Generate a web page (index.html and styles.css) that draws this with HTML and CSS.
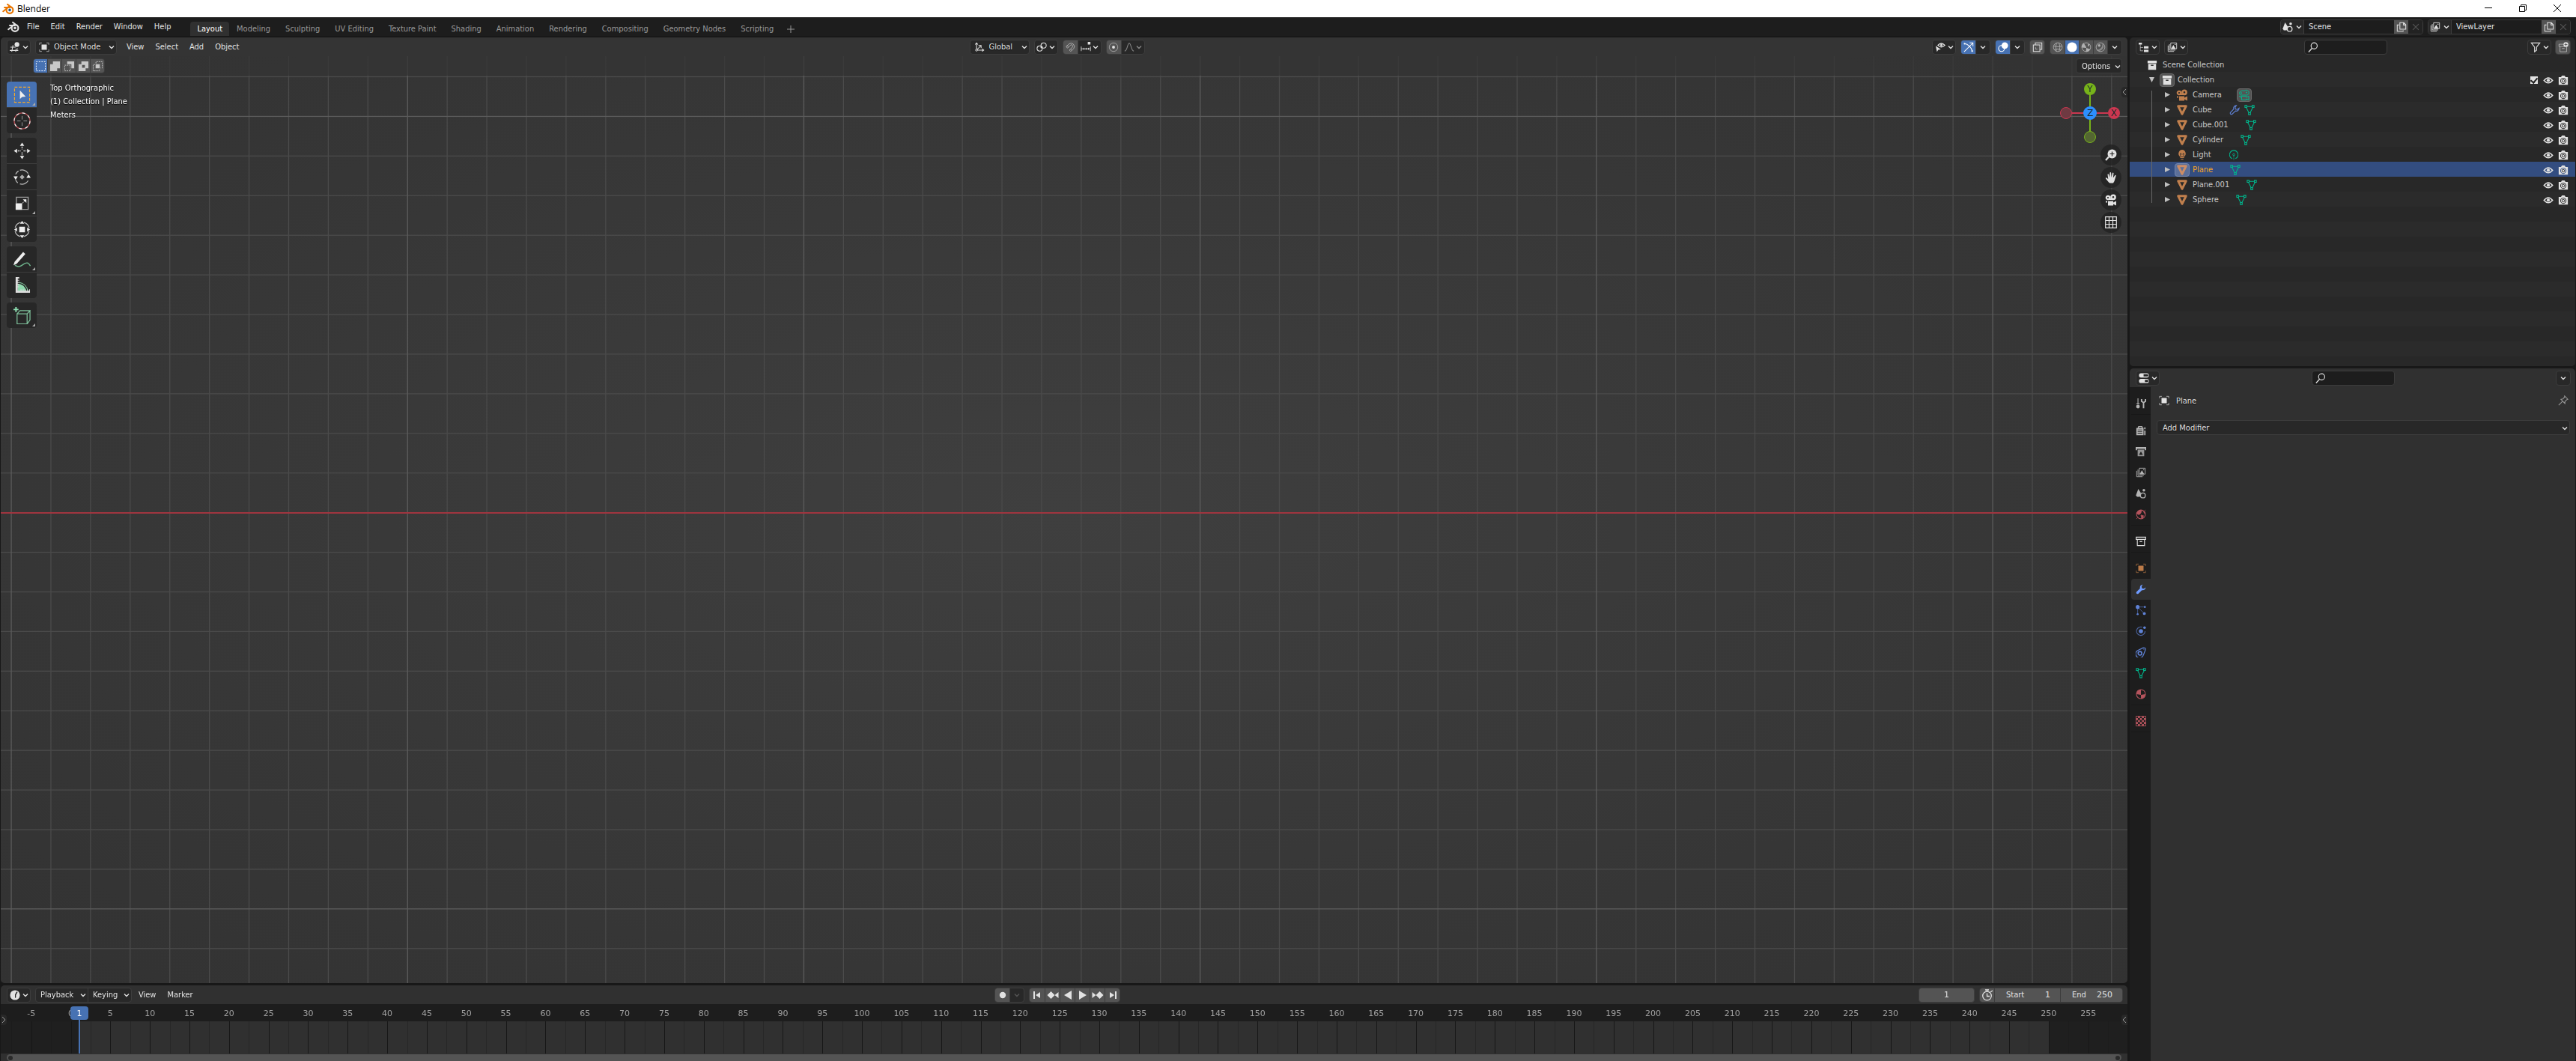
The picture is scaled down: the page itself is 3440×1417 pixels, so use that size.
FILE: index.html
```html
<!DOCTYPE html>
<html lang="en">
<head>
<meta charset="utf-8">
<title>Blender</title>
<link rel="stylesheet" href="styles.css">
</head>
<body>
<svg class="sprite" aria-hidden="true">
  <symbol id="logo" viewBox="0 0 16 16"><path d="M1.2 11.2 8.6 5.2M3 5.9h7M7 1.8l5.8 4.5" fill="none" stroke="currentColor" stroke-width="2" stroke-linecap="round"/><circle cx="10" cy="9.4" r="4.4" fill="none" stroke="currentColor" stroke-width="2.2"/><circle class="pupil" cx="10" cy="9.4" r="1.8"/></symbol>
  <symbol id="chev" viewBox="0 0 8 8"><path d="M1 2.5 4 5.5 7 2.5" fill="none" stroke="currentColor" stroke-width="1.4"/></symbol>
  <symbol id="view3d" viewBox="0 0 16 16"><path d="M1 8h8M0 13h13M5 5 3 15M10 10l-1 5M12 10v1" fill="none" stroke="currentColor" stroke-width="1.2"/><circle cx="11" cy="4" r="3.6" fill="currentColor"/></symbol>
  <symbol id="object" viewBox="0 0 16 16"><path d="M1 4.500V1.500H4.500M11.500 1.500H15V4.500M15 11.500v3H11.500M4.500 14.500H1v-3" fill="none" stroke="currentColor" opacity=".75"/><path d="M4 4h8v8H4z" fill="currentColor"/></symbol>
  <symbol id="axes" viewBox="0 0 16 16"><path d="M3.500 2v10.500H14M3.500 12.500 10 6M1.500 4l2-2.500 2 2.500M12 10.500l2.500 2-2.500 2M6.500 5.500H10.500V9.500" fill="none" stroke="currentColor" stroke-width="1.2"/><circle cx="3.500" cy="12.500" r="1.500" fill="#282828" stroke="currentColor"/></symbol>
  <symbol id="pivot" viewBox="0 0 16 16"><circle cx="5" cy="10" r="4" fill="none" stroke="currentColor" stroke-width="1.200"/><circle cx="11" cy="5.500" r="4" fill="none" stroke="currentColor" stroke-width="1.200"/><circle cx="8" cy="8" r="1.800" fill="currentColor"/></symbol>
  <symbol id="magnet" viewBox="0 0 16 16"><path d="M2 7 6.500 3a5 5 0 0 1 7 7L9 14.500 7 12.500l4.500-4.500a2 2 0 0 0-3-3L4 9.500zM3.500 5.500l2 2M10.500 13l-2-2" fill="none" stroke="currentColor" stroke-width="1.100"/></symbol>
  <symbol id="snap" viewBox="0 0 16 16"><path d="M1 7v7M15 7v7M1 10.500h14M5 9v3M8.500 9v3M12 9v3" fill="none" stroke="currentColor"/><path d="M11 0h4v4h-4z" fill="currentColor"/></symbol>
  <symbol id="prop" viewBox="0 0 16 16"><circle cx="8" cy="8" r="6.500" fill="none" stroke="currentColor" opacity=".6"/><circle cx="8" cy="8" r="2.200" fill="currentColor"/></symbol>
  <symbol id="falloff" viewBox="0 0 16 16"><path d="M1 14C5.500 13 5 2 8 2s2.500 11 7 12" fill="none" stroke="currentColor" stroke-width="1.200"/></symbol>
  <symbol id="visib" viewBox="0 0 16 16"><path d="M4.500 5Q9.500-.5 15 5 9.500 10.500 4.500 5z" fill="none" stroke="currentColor" stroke-width="1.600"/><circle cx="9.700" cy="4.800" r="1.700" fill="currentColor"/><path d="M1 6l8 5.500-4 .5L3 15z" fill="currentColor"/></symbol>
  <symbol id="gizmo" viewBox="0 0 16 16"><path d="M1 15 14 2M9.500 1.500H14.500V6.500M1.500 2.500C7 3 13 9 13.500 14.500" fill="none" stroke="currentColor" stroke-width="1.200"/><circle cx="1.800" cy="2.800" r="1.300" fill="currentColor"/><circle cx="13.300" cy="14" r="1.300" fill="currentColor"/></symbol>
  <symbol id="overlay" viewBox="0 0 16 16"><circle cx="10.500" cy="5.500" r="5" fill="currentColor"/><circle cx="5.500" cy="10" r="4.500" fill="none" stroke="currentColor" stroke-width="1.200"/></symbol>
  <symbol id="xray" viewBox="0 0 16 16"><path d="M1.500 4.500h10v10h-10zM4.500 4V1.500h10v10H12" fill="none" stroke="currentColor" stroke-width="1.200"/><path d="M5 8.500v2.500h3" fill="none" stroke="currentColor" stroke-dasharray="1.500 1"/></symbol>
  <symbol id="wire" viewBox="0 0 16 16"><g fill="none" stroke="currentColor"><circle cx="8" cy="8" r="6.700"/><path d="M1.500 6Q8 9 14.500 6M2.500 12Q8 9.500 13.500 12M6 1.500Q3.500 8 6 14.500M10 1.500Q12.500 8 10 14.500"/></g></symbol>
  <symbol id="solid" viewBox="0 0 16 16"><circle cx="8" cy="8" r="7.500" fill="currentColor"/></symbol>
  <symbol id="matprev" viewBox="0 0 16 16"><circle cx="8" cy="8" r="6.700" fill="none" stroke="currentColor"/><path d="M8 8 4 1.500A7.500 7.500 0 0 0 1 8.500L8 9zM8 9l-.5 6A7 7 0 0 0 14 11zM10.500 3.500h2v3h-2z" fill="currentColor"/></symbol>
  <symbol id="rendered" viewBox="0 0 16 16"><circle cx="8" cy="8" r="6.700" fill="none" stroke="currentColor"/><path d="M2 12Q11 12 11 2A7 7 0 0 1 3 13z" fill="currentColor" opacity=".6"/><circle cx="6" cy="5.500" r="2" fill="currentColor"/></symbol>
  <symbol id="tree" viewBox="0 0 16 16"><path d="M0 1h5v3H0zM8 6.500h7V10H8zM8 12h7v3.500H8z" fill="currentColor"/><path d="M2.500 4v9.500H7M2.500 8.500H7" fill="none" stroke="currentColor" opacity=".7"/></symbol>
  <symbol id="images" viewBox="0 0 16 16"><path d="M5.500 1.500h9v9h-9zM3.500 3.500v9h9M1.500 5.500v9h9" fill="none" stroke="currentColor"/><path d="M6 10.500l3.500-6 3.500 6zM11.500 3h1.500v1.500h-1.500z" fill="currentColor"/></symbol>
  <symbol id="scene" viewBox="0 0 16 16"><path d="M4 1 8 7.500 6.500 13H2L.5 10.500z" fill="currentColor"/><circle cx="12.500" cy="3" r="2" fill="currentColor"/><circle cx="11" cy="11" r="3.700" fill="none" stroke="currentColor" stroke-width="1.500"/></symbol>
  <symbol id="copy" viewBox="0 0 16 16"><path d="M5.500 1.500h6l3 3v7h-9zM11 1.500V5h3.500M4 5H1.500v9.500h9V13" fill="none" stroke="currentColor" stroke-width="1.200"/></symbol>
  <symbol id="close" viewBox="0 0 16 16"><path d="M3.500 3.500l9 9M12.500 3.500l-9 9" stroke="currentColor" stroke-width="1.200"/></symbol>
  <symbol id="search" viewBox="0 0 16 16"><circle cx="9.500" cy="6" r="4.700" fill="none" stroke="currentColor" stroke-width="1.300"/><path d="M6.500 9.500 1 15.500" stroke="currentColor" stroke-width="1.500"/></symbol>
  <symbol id="filter" viewBox="0 0 16 16"><path d="M1.500 1.500h13L9.500 8v4.500l-3 2.500V8z" fill="none" stroke="currentColor" stroke-width="1.300"/></symbol>
  <symbol id="newcol" viewBox="0 0 16 16"><path d="M8 3.500H1.500V7H14M3 7v8h10V8M6 10h4" fill="none" stroke="currentColor" opacity=".7"/><circle cx="12" cy="4" r="3.700" fill="currentColor"/><path d="M12 1.800v4.400M9.800 4h4.400" stroke="#545454"/></symbol>
  <symbol id="coll" viewBox="0 0 16 16"><path d="M1 1h14v4H1zM2 6h12v9H2z" fill="currentColor"/><path d="M6 7.500h4V9H6z" fill="#222"/></symbol>
  <symbol id="collline" viewBox="0 0 16 16"><path d="M.8 1.500h14.400V5H.8zM2.500 5h11v9.500h-11z" fill="none" stroke="currentColor" stroke-width="1.300"/><path d="M6 7.500h4V9H6z" fill="currentColor"/></symbol>
  <symbol id="camera" viewBox="0 0 16 16"><circle cx="4" cy="5" r="2.200" fill="none" stroke="currentColor" stroke-width="2.200"/><circle cx="11" cy="4.300" r="2.600" fill="none" stroke="currentColor" stroke-width="2.600"/><path d="M4 9.500h7v2l4-2V15.500l-4-2v2H4zM1 9.500h2v2H1zM4 6h6v2H4z" fill="currentColor"/></symbol>
  <symbol id="camdata" viewBox="0 0 16 16"><g fill="none" stroke="currentColor"><path d="M3.500 2.800Q6 1 8 2.500a3.500 3.500 0 1 1 4 5.500H3.500a2.700 2.700 0 0 1 0-5.200zM4.500 9.500h6v1.500l3.500-1.500v5L10.500 13v1.500h-6zM1 9.500h2v2"/></g><circle cx="4" cy="5.300" r="1" fill="currentColor"/><circle cx="11" cy="4.500" r="1" fill="currentColor"/></symbol>
  <symbol id="mesh" viewBox="0 0 16 16"><path d="M2 2h12L8 14z" fill="none" stroke="currentColor" stroke-width="3.400" stroke-linejoin="round"/></symbol>
  <symbol id="meshdata" viewBox="0 0 16 16"><path d="M4 2.500h8M3 4l4 8M13 4l-4 8M1 1h3v3H1zM12 1h3v3h-3zM6.500 12h3v3h-3z" fill="none" stroke="currentColor" stroke-width="1.200"/></symbol>
  <symbol id="light" viewBox="0 0 16 16"><path fill-rule="evenodd" d="M8 0a5.800 5.800 0 0 1 3 10.500H5A5.800 5.800 0 0 1 8 0zM5 5v4h1V6.500h4V9h1V5H9.500v2h-3V5zM5 11.500h6v1H5zM6 14h4v1.200H6z" fill="currentColor"/></symbol>
  <symbol id="lightdata" viewBox="0 0 16 16"><path d="M5.500 13.500a6.500 6.500 0 1 1 5 0" fill="none" stroke="currentColor" stroke-width="1.200"/><circle cx="8" cy="7.500" r="1.500" fill="none" stroke="currentColor"/><path d="M8 9v7" stroke="currentColor" stroke-dasharray="2 1"/></symbol>
  <symbol id="wrench" viewBox="0 0 16 16"><path d="M10.800.8A4.300 4.300 0 0 0 6.700 6.500L1.200 12a2 2 0 0 0 2.800 2.800L9.500 9.300A4.300 4.300 0 0 0 15.200 5L12.500 7 9.500 6.500 9 3.500z" fill="currentColor"/></symbol>
  <symbol id="wrenchline" viewBox="0 0 16 16"><path d="M10.800 1A4.300 4.300 0 0 0 6.700 6.500L1.500 12a2 2 0 0 0 2.500 2.500L9.500 9.300A4.300 4.300 0 0 0 15 5L12.500 7 9.500 6.500 9 3.500z" fill="none" stroke="currentColor" stroke-width="1.300"/></symbol>
  <symbol id="eye" viewBox="0 0 16 16"><path d="M1.500 8.500Q8 .5 14.500 8.500 8 16 1.500 8.500z" fill="none" stroke="currentColor" stroke-width="1.800"/><circle cx="8" cy="8.300" r="2.400" fill="currentColor"/></symbol>
  <symbol id="photo" viewBox="0 0 16 16"><path fill-rule="evenodd" d="M1 3.500h3.500L6 1h4l1.500 2.500H15V15H1zM8 4.500a4.700 4.700 0 1 0 .1 0z" fill="currentColor"/><circle cx="8" cy="9.200" r="3.600" fill="currentColor"/><circle cx="8" cy="9.200" r="2" fill="none" stroke="#282828"/></symbol>
  <symbol id="props" viewBox="0 0 16 16"><rect x=".5" y=".5" width="15" height="6.500" rx="3" fill="currentColor"/><rect x=".5" y="9" width="15" height="6.500" rx="3" fill="currentColor"/><path d="M7.500 2h5.500a1 1 0 0 1 0 3.500H7.500zM9.500 10.500H13a1 1 0 0 1 0 3.500H9.500z" fill="#282828"/></symbol>
  <symbol id="tool" viewBox="0 0 16 16"><path d="M3.500 0v6M1 8h5M3.500 6v3" stroke="currentColor" stroke-width="1.300"/><circle cx="3.500" cy="12.500" r="2.800" fill="currentColor"/><path d="M9 1v3.500L12 6.500 15 4.500V1M12 6.500V15" fill="none" stroke="currentColor" stroke-width="2.200"/></symbol>
  <symbol id="render" viewBox="0 0 16 16"><path fill-rule="evenodd" d="M1 4h2l1-3h6l1 3h1v11H1zM5 4h4V2.500H5zM3 6.500v1h7v-1zM3 9v1h7V9zM3 11.500v1h7v-1zM13 3h2v3h-2zM13 8h2v7h-2z" fill="currentColor"/></symbol>
  <symbol id="output" viewBox="0 0 16 16"><path d="M0 1h16v5h-2V4H2v2H0z" fill="currentColor"/><path fill-rule="evenodd" d="M3 5h10v10H3zM5 13l3-5 3 5z" fill="currentColor" opacity=".8"/></symbol>
  <symbol id="world" viewBox="0 0 16 16"><circle cx="8" cy="8" r="6.700" fill="none" stroke="currentColor" stroke-width="1.200"/><path d="M2 5Q5 1 9 2L8 6 5 8.500 2 7zM8 9l4 1-1 3-2 1zM13 3l2-2M1 15l2-2M12 4l2 3V4z" fill="currentColor" stroke="currentColor" stroke-width=".8"/></symbol>
  <symbol id="particles" viewBox="0 0 16 16"><path d="M3 3h11M3 3v11M3 3l10 10" stroke="currentColor" opacity=".7"/><circle cx="3" cy="3" r="2.900" fill="currentColor"/><circle cx="14" cy="3" r="1.500" fill="currentColor"/><circle cx="3" cy="14" r="1.500" fill="currentColor"/><circle cx="13.200" cy="13" r="2.200" fill="currentColor"/></symbol>
  <symbol id="physics" viewBox="0 0 16 16"><path d="M10 1.800A6.500 6.500 0 1 0 14.300 8" fill="none" stroke="currentColor" opacity=".7" stroke-width="1.200"/><circle cx="8" cy="8" r="3.200" fill="currentColor"/><circle cx="13.500" cy="2.500" r="2" fill="currentColor"/></symbol>
  <symbol id="constraint" viewBox="0 0 16 16"><path d="M2.500 5.800 11.500 1.300Q15.300.5 15 4L11.700 12.500A6 6 0 1 1 2.500 5.800z" fill="none" stroke="currentColor" stroke-width="1.300"/><circle cx="6.500" cy="9.800" r="2.800" fill="none" stroke="currentColor" stroke-width="1.800"/><circle cx="12.500" cy="3.500" r=".8" fill="currentColor"/></symbol>
  <symbol id="material" viewBox="0 0 16 16"><circle cx="8" cy="8" r="6.900" fill="none" stroke="currentColor" stroke-width="1.200"/><path d="M8 1A7 7 0 0 0 1 8l7 1zM8 9l7-1a7 7 0 0 1-7 7z" fill="currentColor"/></symbol>
  <symbol id="texture" viewBox="0 0 16 16"><path d="M.5.5h15v15H.5z" fill="none" stroke="currentColor"/><path d="M3.500.5h3v3h-3zM9.500.5h3v3h-3zM.5 3.500h3v3h-3zM6.500 3.500h3v3h-3zM12.500 3.500h3v3h-3zM3.500 6.500h3v3h-3zM9.500 6.500h3v3h-3zM.5 9.500h3v3h-3zM6.500 9.500h3v3h-3zM12.500 9.500h3v3h-3zM3.500 12.500h3v3h-3zM9.500 12.500h3v3h-3z" fill="currentColor"/></symbol>
  <symbol id="pin" viewBox="0 0 16 16"><path d="M10 1l5 5-1.500.5-3 3v3L4.500 6l3-.5 2.500-3zM7 9l-6 6" fill="none" stroke="currentColor" stroke-width="1.200"/></symbol>
  <symbol id="clock" viewBox="0 0 16 16"><circle cx="8" cy="8" r="7.500" fill="currentColor"/><path d="M10.500 2.500 8 7v5.500l1.500-1V8l2.500-4.500z" fill="#282828"/></symbol>
  <symbol id="stopwatch" viewBox="0 0 16 16"><circle cx="7.500" cy="9" r="5.800" fill="none" stroke="currentColor" stroke-width="1.300"/><path d="M5 1h5M7.500 1v2M7.500 5.500V9.500H11M12 4l3-2" fill="none" stroke="currentColor" stroke-width="1.300"/></symbol>
  <symbol id="rec" viewBox="0 0 16 16"><circle cx="8" cy="8" r="4.200" fill="currentColor"/></symbol>
  <symbol id="first" viewBox="0 0 16 16"><path d="M3 3h2v10H3zM12 4v8L6 8z" fill="currentColor"/></symbol>
  <symbol id="prevkey" viewBox="0 0 16 16"><path d="M5.500 3l5 5-5 5-5-5zM15.500 4v8l-5-4z" fill="currentColor"/></symbol>
  <symbol id="playrev" viewBox="0 0 16 16"><path d="M13 2v12L3 8z" fill="currentColor"/></symbol>
  <symbol id="play" viewBox="0 0 16 16"><path d="M3 2v12l10-6z" fill="currentColor"/></symbol>
  <symbol id="nextkey" viewBox="0 0 16 16"><path d="M10.500 3l5 5-5 5-5-5zM.5 4v8l5-4z" fill="currentColor"/></symbol>
  <symbol id="last" viewBox="0 0 16 16"><path d="M11 3h2v10h-2zM4 4v8l6-4z" fill="currentColor"/></symbol>
  <symbol id="hand" viewBox="0 0 16 16"><path d="M5 14.500 1 9.500Q.5 8 2 8.300l2.300 2L3.500 4q.6-1.300 1.500 0l1.200 4L6.500 1.500q.7-1.200 1.600 0L8.500 8 10 2q.9-1 1.500.3L10.800 8.500 13.500 5q1.200-.5 1.200.8L12.500 13l-1.500 2.500H6.500z" fill="currentColor"/></symbol>
  <symbol id="zoom" viewBox="0 0 16 16"><circle cx="9.500" cy="6.500" r="6" fill="currentColor"/><path d="M5 10.500 1 15" stroke="currentColor" stroke-width="2.200"/><path d="M9.500 3.500v6M6.500 6.500h6" stroke="#222" stroke-width="1.200"/></symbol>
  <symbol id="grid" viewBox="0 0 16 16"><path d="M.7.700h14.600v14.600H.7zM5.500.7v14.600M10.500.7v14.600M.7 5.500h14.600M.7 10.500h14.600" fill="none" stroke="currentColor" stroke-width="1.200"/></symbol>
</svg>

<header class="titlebar">
  <svg class="i16 appicon"><use href="#logo"/></svg><span class="apptitle">Blender</span>
  <div class="winbtns">
    <button aria-label="Minimize"><svg viewBox="0 0 12 12"><path d="M1 5.500h10" stroke="#000"/></svg></button>
    <button aria-label="Restore"><svg viewBox="0 0 12 12"><path d="M1.500 3.500h7v7h-7zM3.500 3V1.500h7v7H9" fill="none" stroke="#000"/></svg></button>
    <button aria-label="Close"><svg viewBox="0 0 12 12"><path d="M1 1l10 10M11 1 1 11" stroke="#000"/></svg></button>
  </div>
</header>

<nav class="topbar">
  <svg class="i16 mainlogo"><use href="#logo"/></svg>
  <div class="menu"><button>File</button><button>Edit</button><button>Render</button><button>Window</button><button>Help</button></div>
  <div class="tabs">
    <button class="on">Layout</button><button>Modeling</button><button>Sculpting</button><button>UV Editing</button><button>Texture Paint</button><button>Shading</button><button>Animation</button><button>Rendering</button><button>Compositing</button><button>Geometry Nodes</button><button>Scripting</button><button class="plus" aria-label="Add workspace"><svg viewBox="0 0 10 10"><path d="M5 0v10M0 5h10" stroke="currentColor"/></svg></button>
  </div>
  <div class="idblock">
    <button class="pick" aria-label="Browse scene"><svg class="i14"><use href="#scene"/></svg><svg class="c"><use href="#chev"/></svg></button><input aria-label="Scene" value="Scene"><button class="lit" aria-label="New scene"><svg class="i14"><use href="#copy"/></svg></button><button class="off" aria-label="Delete scene"><svg class="i14"><use href="#close"/></svg></button>
  </div>
  <div class="idblock">
    <button class="pick" aria-label="Browse view layer"><svg class="i14"><use href="#images"/></svg><svg class="c"><use href="#chev"/></svg></button><input aria-label="View layer" value="ViewLayer"><button class="lit" aria-label="New view layer"><svg class="i14"><use href="#copy"/></svg></button><button class="off" aria-label="Delete view layer"><svg class="i14"><use href="#close"/></svg></button>
  </div>
</nav>

<main class="screen">
  <div class="left">
    <section class="area viewport">
      <canvas id="viewgrid"></canvas>
      <div class="head">
        <div class="part">
          <button class="btn ed" aria-label="Editor type"><svg class="i14"><use href="#view3d"/></svg><svg class="c"><use href="#chev"/></svg></button>
          <label class="btn mode"><svg class="i14"><use href="#object"/></svg><select aria-label="Mode"><option>Object Mode</option></select><svg class="c"><use href="#chev"/></svg></label>
          <div class="menu"><button>View</button><button>Select</button><button>Add</button><button>Object</button></div>
        </div>
        <div class="part mid">
          <label class="btn orient"><svg class="i14"><use href="#axes"/></svg><select aria-label="Orientation"><option>Global</option></select><svg class="c"><use href="#chev"/></svg></label>
          <button class="btn ed" aria-label="Pivot"><svg class="i14"><use href="#pivot"/></svg><svg class="c"><use href="#chev"/></svg></button>
          <div class="btn row"><button class="lit dim" aria-label="Snap"><svg class="i14"><use href="#magnet"/></svg></button><button class="w31" aria-label="Snap to"><svg class="i14"><use href="#snap"/></svg><svg class="c"><use href="#chev"/></svg></button></div>
          <div class="btn row"><button class="lit" aria-label="Proportional editing"><svg class="i14"><use href="#prop"/></svg></button><button class="w31 off2" aria-label="Falloff"><svg class="i14"><use href="#falloff"/></svg><svg class="c"><use href="#chev"/></svg></button></div>
        </div>
        <div class="part end">
          <button class="btn ed" aria-label="Visibility"><svg class="i14"><use href="#visib"/></svg><svg class="c"><use href="#chev"/></svg></button>
          <div class="btn row"><button class="blue" aria-label="Gizmos"><svg class="i14"><use href="#gizmo"/></svg></button><button aria-label="Gizmo options"><svg class="c"><use href="#chev"/></svg></button></div>
          <div class="btn row"><button class="blue" aria-label="Overlays"><svg class="i14"><use href="#overlay"/></svg></button><button aria-label="Overlay options"><svg class="c"><use href="#chev"/></svg></button></div>
          <div class="btn row"><button class="lit" aria-label="X-ray"><svg class="i14"><use href="#xray"/></svg></button></div>
          <div class="btn row"><button class="lit dim" aria-label="Wireframe"><svg class="i14"><use href="#wire"/></svg></button><button class="blue" aria-label="Solid"><svg class="i14"><use href="#solid"/></svg></button><button class="lit dim" aria-label="Material preview"><svg class="i14"><use href="#matprev"/></svg></button><button class="lit dim" aria-label="Rendered"><svg class="i14"><use href="#rendered"/></svg></button><button aria-label="Shading options"><svg class="c"><use href="#chev"/></svg></button></div>
        </div>
      </div>
      <div class="toolhead">
        <div class="btn row modes">
          <button class="blue" aria-label="Set"><svg viewBox="0 0 16 16"><path d="M1.500 1.500h13v13h-13z" fill="none" stroke="#fff" stroke-dasharray="2 1.700"/></svg></button>
          <button class="lit" aria-label="Extend"><svg viewBox="0 0 16 16"><path d="M5 1h10v10h-4v4H1V5h4z" fill="#c8c8c8"/></svg></button>
          <button class="lit" aria-label="Subtract"><svg viewBox="0 0 16 16"><path d="M5 1h10v10h-4V5H5z" fill="#c8c8c8"/><path d="M1.500 6.500h8v8h-8z" fill="none" stroke="#c8c8c8" stroke-dasharray="2 1.200"/></svg></button>
          <button class="lit" aria-label="Invert"><svg viewBox="0 0 16 16"><path fill-rule="evenodd" d="M5 1h10v10h-4v4H1V5h4zM6 6v4h4V6z" fill="#c8c8c8"/></svg></button>
          <button class="lit" aria-label="Intersect"><svg viewBox="0 0 16 16"><path d="M5 5h6v6H5z" fill="#c8c8c8"/><path d="M5.500 4V1.500h9v9H12M4 5.500H1.500v9h9V12" fill="none" stroke="#c8c8c8" stroke-dasharray="2 1.200"/></svg></button>
        </div>
        <button class="btn options">Options<svg class="c"><use href="#chev"/></svg></button>
      </div>
      <div class="viewbody">
        <div class="toolbar">
          <div class="tools">
            <button class="blue sub" aria-label="Select box"><svg viewBox="0 0 24 24"><path d="M1.500 1.500h21v21h-21z" fill="none" stroke="#f5a92a" stroke-width="1.200" stroke-dasharray="4 2"/><path d="M9 6v12l3-3 5-.5z" fill="#eee"/></svg></button>
            <button aria-label="Cursor"><svg viewBox="0 0 24 24"><circle cx="12" cy="12" r="11" fill="none" stroke="#b04a50" stroke-width="1.300"/><circle cx="12" cy="12" r="11" fill="none" stroke="#eee" stroke-width="1.300" stroke-dasharray="4.300 4.300"/><path d="M12 5v5M12 14v5M5 12h5M14 12h5" stroke="#999"/></svg></button>
          </div>
          <div class="tools">
            <button aria-label="Move"><svg viewBox="0 0 24 24"><path d="M12 .5l3 4.500H9zM12 23.500 9 19h6zM.5 12 5 9v6zM23.500 12 19 15V9z" fill="#eee"/><path d="M12 6v4M12 14v4M6 12h4M14 12h4" stroke="#ddd" stroke-width="1.500" stroke-dasharray="2 1"/></svg></button>
            <button aria-label="Rotate"><svg viewBox="0 0 24 24"><path d="M3 8A10 10 0 0 1 7 3.500M9 2.500A10 10 0 0 1 20.500 7M3 16a10 10 0 0 0 3 4M9 21.500a10 10 0 0 0 11.500-4.500" fill="none" stroke="#bbb" stroke-width="1.300"/><path d="M21 8l3 5h-6zM3 16l-3-5h6z" fill="#eee"/><path d="M12 8.500l3.500 3.500-3.500 3.500L8.500 12z" fill="#aaa"/></svg></button>
            <button class="sub" aria-label="Scale"><svg viewBox="0 0 24 24"><path d="M4 12V3.500h16.500v17H12" fill="none" stroke="#999" stroke-width="1.500"/><path d="M3 12h9v9H3zM13 6.500h5v5z" fill="#eee"/><path d="M12.500 12 17 7" stroke="#eee" stroke-dasharray="2 1"/></svg></button>
            <button aria-label="Transform"><svg viewBox="0 0 24 24"><circle cx="12" cy="12" r="10" fill="none" stroke="#bbb" stroke-width="1.300" stroke-dasharray="11 4.700" stroke-dashoffset="-2.300"/><path d="M8 8h8v8H8zM12 0l3 4H9zM12 24l-3-4h6zM1 12l4-3v6zM23 12l-4 3V9z" fill="#eee"/></svg></button>
          </div>
          <div class="tools">
            <button class="sub" aria-label="Annotate"><svg viewBox="0 0 24 24"><path d="M13.500 1.500 1.500 15.500 0 20l4.500-2L16.500 4.500z" fill="#eee"/><path d="M2 20q5 4 10 0t8-3q2 1 3.500 4" fill="none" stroke="#6fb48d" stroke-width="1.500"/></svg></button>
            <button aria-label="Measure"><svg viewBox="0 0 24 24"><path d="M6 9a13 13 0 0 1 12 11H6z" fill="#8fd9ae"/><path d="M3 0h5v2H6v2h2v1H6v2h2v1H6v2h2v1H6v2h2v1H6v5h4v-2h1v2h2v-2h1v2h2v-2h1v2h2v-2h1v2h2v-2h1v5H3z" fill="#ddd"/><path d="M8 7.500A15 15 0 0 1 20 19" fill="none" stroke="#8fd9ae"/></svg></button>
          </div>
          <div class="tools">
            <button class="sub" aria-label="Add cube"><svg viewBox="0 0 24 24"><path d="M5 9.500h14v14H5zM5 9.500l4-4.500h14l-4 4.500M23 5v13l-4 5.500" fill="none" stroke="#7fc29c" stroke-width="1.300"/><path d="M3.500 0v7M0 3.500h7" stroke="#8fe3b4" stroke-width="2"/></svg></button>
          </div>
        </div>
        <div class="info"><p>Top Orthographic</p><p>(1) Collection | Plane</p><p>Meters</p></div>
        <div class="nav">
          <svg class="gizmo" viewBox="0 0 80 80">
            <path d="M16 40h48" stroke="#cc3750" stroke-width="2"/><path d="M40 8v56" stroke="#77b31a" stroke-width="2"/>
            <circle cx="8" cy="40" r="7.500" fill="#6f3a42" stroke="#cc3750"/><circle cx="40" cy="72" r="7.500" fill="#546632" stroke="#77b31a"/>
            <circle cx="72" cy="40" r="8" fill="#cc3750"/><circle cx="40" cy="8" r="8" fill="#77b31a"/><circle cx="40" cy="40" r="9" fill="#2c8fff"/>
            <text x="72" y="44">X</text><text x="40" y="12">Y</text><text x="40" y="44">Z</text>
          </svg>
          <button aria-label="Zoom"><svg class="i16"><use href="#zoom"/></svg></button>
          <button aria-label="Pan"><svg class="i16"><use href="#hand"/></svg></button>
          <button aria-label="Camera view"><svg class="i16"><use href="#camera"/></svg></button>
          <button aria-label="Toggle perspective"><svg class="i16"><use href="#grid"/></svg></button>
        </div>
        <span class="handle r"><svg viewBox="0 0 8 14"><path d="M6 3 2 7l4 4" fill="none" stroke="#999"/></svg></span>
      </div>
    </section>

    <section class="area timeline">
      <div class="head">
        <div class="part">
          <button class="btn ed" aria-label="Editor type"><svg class="i14"><use href="#clock"/></svg><svg class="c"><use href="#chev"/></svg></button>
          <div class="btn row text"><button>Playback<svg class="c"><use href="#chev"/></svg></button><button>Keying<svg class="c"><use href="#chev"/></svg></button></div>
          <div class="menu"><button>View</button><button>Marker</button></div>
        </div>
        <div class="part mid">
          <div class="btn row"><button class="lit" aria-label="Auto keying"><svg class="i16"><use href="#rec"/></svg></button><button class="off" aria-label="Auto keying options"><svg class="c"><use href="#chev"/></svg></button></div>
          <div class="btn row transport"><button class="lit" aria-label="Jump to start"><svg class="i16"><use href="#first"/></svg></button><button class="lit" aria-label="Previous keyframe"><svg class="i16"><use href="#prevkey"/></svg></button><button class="lit" aria-label="Play reversed"><svg class="i16"><use href="#playrev"/></svg></button><button class="lit" aria-label="Play"><svg class="i16"><use href="#play"/></svg></button><button class="lit" aria-label="Next keyframe"><svg class="i16"><use href="#nextkey"/></svg></button><button class="lit" aria-label="Jump to end"><svg class="i16"><use href="#last"/></svg></button></div>
        </div>
        <div class="part end">
          <input class="btn frame" aria-label="Current frame" value="1">
          <div class="btn row range"><button class="lit" aria-label="Use preview range"><svg class="i16"><use href="#stopwatch"/></svg></button><label class="start">Start<input value="1"></label><label class="stop">End<input value="250"></label></div>
        </div>
      </div>
      <div class="ruler" id="ruler"></div>
      <div class="scroll"><i></i><i></i></div>
      <span class="handle l"><svg viewBox="0 0 8 14"><path d="M2 3l4 4-4 4" fill="none" stroke="#999"/></svg></span>
      <span class="handle r"><svg viewBox="0 0 8 14"><path d="M6 3 2 7l4 4" fill="none" stroke="#999"/></svg></span>
    </section>
  </div>

  <div class="right">
    <section class="area outliner">
      <div class="head">
        <div class="part">
          <button class="btn ed" aria-label="Editor type"><svg class="i14"><use href="#tree"/></svg><svg class="c"><use href="#chev"/></svg></button>
          <button class="btn ed" aria-label="Display mode"><svg class="i14"><use href="#images"/></svg><svg class="c"><use href="#chev"/></svg></button>
        </div>
        <div class="part mid"><label class="btn find"><svg class="i14"><use href="#search"/></svg><input aria-label="Filter"></label></div>
        <div class="part end">
          <button class="btn ed" aria-label="Filter options"><svg class="i14"><use href="#filter"/></svg><svg class="c"><use href="#chev"/></svg></button>
          <div class="btn row"><button class="lit" aria-label="New collection"><svg class="i14"><use href="#newcol"/></svg></button></div>
        </div>
      </div>
      <ul class="treelist">
        <li class="root"><span class="ico"><svg class="i14"><use href="#coll"/></svg></span><span>Scene Collection</span></li>
        <li class="coll"><svg class="tri" viewBox="0 0 6 6"><path d="M0 0h6L3 6z" fill="currentColor"/></svg><span class="ico box"><svg class="i14"><use href="#coll"/></svg></span><span>Collection</span><span class="tog"><input type="checkbox" checked aria-label="Include collection"><svg class="i14"><use href="#eye"/></svg><svg class="i14"><use href="#photo"/></svg></span></li>
        <li><svg class="tri" viewBox="0 0 6 6"><path d="M0 0v6l6-3z" fill="currentColor"/></svg><span class="ico"><svg class="i16"><use href="#camera"/></svg></span><span>Camera</span><span class="data box"><svg class="i16"><use href="#camdata"/></svg></span><span class="tog"><svg class="i14"><use href="#eye"/></svg><svg class="i14"><use href="#photo"/></svg></span></li>
        <li><svg class="tri" viewBox="0 0 6 6"><path d="M0 0v6l6-3z" fill="currentColor"/></svg><span class="ico"><svg class="i14"><use href="#mesh"/></svg></span><span>Cube</span><span class="data mod"><svg class="i14"><use href="#wrenchline"/></svg></span><span class="data next"><svg class="i14"><use href="#meshdata"/></svg></span><span class="tog"><svg class="i14"><use href="#eye"/></svg><svg class="i14"><use href="#photo"/></svg></span></li>
        <li><svg class="tri" viewBox="0 0 6 6"><path d="M0 0v6l6-3z" fill="currentColor"/></svg><span class="ico"><svg class="i14"><use href="#mesh"/></svg></span><span>Cube.001</span><span class="data"><svg class="i14"><use href="#meshdata"/></svg></span><span class="tog"><svg class="i14"><use href="#eye"/></svg><svg class="i14"><use href="#photo"/></svg></span></li>
        <li><svg class="tri" viewBox="0 0 6 6"><path d="M0 0v6l6-3z" fill="currentColor"/></svg><span class="ico"><svg class="i14"><use href="#mesh"/></svg></span><span>Cylinder</span><span class="data"><svg class="i14"><use href="#meshdata"/></svg></span><span class="tog"><svg class="i14"><use href="#eye"/></svg><svg class="i14"><use href="#photo"/></svg></span></li>
        <li><svg class="tri" viewBox="0 0 6 6"><path d="M0 0v6l6-3z" fill="currentColor"/></svg><span class="ico"><svg class="i14"><use href="#light"/></svg></span><span>Light</span><span class="data"><svg class="i14"><use href="#lightdata"/></svg></span><span class="tog"><svg class="i14"><use href="#eye"/></svg><svg class="i14"><use href="#photo"/></svg></span></li>
        <li class="active"><svg class="tri" viewBox="0 0 6 6"><path d="M0 0v6l6-3z" fill="currentColor"/></svg><span class="ico box"><svg class="i14"><use href="#mesh"/></svg></span><span>Plane</span><span class="data"><svg class="i14"><use href="#meshdata"/></svg></span><span class="tog"><svg class="i14"><use href="#eye"/></svg><svg class="i14"><use href="#photo"/></svg></span></li>
        <li><svg class="tri" viewBox="0 0 6 6"><path d="M0 0v6l6-3z" fill="currentColor"/></svg><span class="ico"><svg class="i14"><use href="#mesh"/></svg></span><span>Plane.001</span><span class="data"><svg class="i14"><use href="#meshdata"/></svg></span><span class="tog"><svg class="i14"><use href="#eye"/></svg><svg class="i14"><use href="#photo"/></svg></span></li>
        <li><svg class="tri" viewBox="0 0 6 6"><path d="M0 0v6l6-3z" fill="currentColor"/></svg><span class="ico"><svg class="i14"><use href="#mesh"/></svg></span><span>Sphere</span><span class="data"><svg class="i14"><use href="#meshdata"/></svg></span><span class="tog"><svg class="i14"><use href="#eye"/></svg><svg class="i14"><use href="#photo"/></svg></span></li>
      </ul>
    </section>

    <section class="area properties">
      <div class="head">
        <div class="part"><button class="btn ed" aria-label="Editor type"><svg class="i14"><use href="#props"/></svg><svg class="c"><use href="#chev"/></svg></button></div>
        <div class="part mid"><label class="btn find"><svg class="i14"><use href="#search"/></svg><input aria-label="Search properties"></label></div>
        <div class="part end"><button class="btn ed sq" aria-label="Options"><svg class="c"><use href="#chev"/></svg></button></div>
      </div>
      <div class="propbody">
        <div class="proptabs">
          <div><button aria-label="Tool"><svg class="i14"><use href="#tool"/></svg></button></div>
          <div><button aria-label="Render"><svg class="i14"><use href="#render"/></svg></button><button aria-label="Output"><svg class="i14"><use href="#output"/></svg></button><button aria-label="View layer"><svg class="i14"><use href="#images"/></svg></button><button aria-label="Scene"><svg class="i14"><use href="#scene"/></svg></button><button class="red" aria-label="World"><svg class="i14"><use href="#world"/></svg></button></div>
          <div><button class="white" aria-label="Collection"><svg class="i14"><use href="#collline"/></svg></button></div>
          <div><button class="orange" aria-label="Object"><svg class="i14"><use href="#object"/></svg></button><button class="mods on" aria-label="Modifiers"><svg class="i14"><use href="#wrench"/></svg></button><button class="bluei" aria-label="Particles"><svg class="i14"><use href="#particles"/></svg></button><button class="bluei" aria-label="Physics"><svg class="i14"><use href="#physics"/></svg></button><button class="bluei" aria-label="Constraints"><svg class="i14"><use href="#constraint"/></svg></button><button class="green" aria-label="Object data"><svg class="i14"><use href="#meshdata"/></svg></button><button class="red" aria-label="Material"><svg class="i14"><use href="#material"/></svg></button></div>
          <div><button class="red" aria-label="Texture"><svg class="i14"><use href="#texture"/></svg></button></div>
        </div>
        <div class="panel">
          <div class="crumb"><svg class="i14"><use href="#object"/></svg><span>Plane</span><svg class="i14 pin"><use href="#pin"/></svg></div>
          <button class="btn addmod">Add Modifier<svg class="c"><use href="#chev"/></svg></button>
        </div>
      </div>
    </section>
  </div>
</main>
<script src="app.js"></script>
</body>
</html>
```
FILE: styles.css
```css
* { box-sizing: border-box; }
body {
  margin: 0;
  height: 100vh;
  display: flex;
  flex-direction: column;
  background: #181818;
  color: #e2e2e2;
  font: 11px/14px "DejaVu Sans Condensed", "DejaVu Sans", sans-serif;
  overflow: hidden;
}
button, input, select {
  font: inherit;
  color: inherit;
  background: none;
  border: 0;
  margin: 0;
  padding: 0;
  border-radius: 0;
  appearance: none;
  outline: 0;
}
button { display: flex; align-items: center; justify-content: center; white-space: nowrap; }
p, ul { margin: 0; padding: 0; list-style: none; }
svg { display: block; flex: none; }
.sprite { display: none; }
.i14 { width: 14px; height: 14px; }
.i16 { width: 16px; height: 16px; }
.c { width: 8px; height: 8px; }

/* window frame */
.titlebar { height: 23px; flex: none; background: #fff; color: #000; display: flex; align-items: center; padding: 0 12px 0 3px; }
.appicon { color: #ea7600; fill: #265787; }
.mainlogo { fill: #e2e2e2; }
.apptitle { margin-left: 4px; font: 12px/16px "Open Sans", "Noto Sans", sans-serif; }
.winbtns { margin-left: auto; display: flex; gap: 34px; padding-right: 7px; padding-bottom: 2px; }
.winbtns svg { width: 12px; height: 12px; }

.topbar { height: 25px; flex: none; margin-bottom: 2px; background: #1d1d1d; display: flex; align-items: center; padding: 0 7px 0 10px; gap: 6px; }
.menu { display: flex; gap: 15px; text-shadow: 0 1px 1px #000; }
.menu button { padding-top: 1px; }
.topbar .menu { margin-left: 4px; }
.tabs { align-self: flex-end; display: flex; margin-left: 20px; color: #989898; flex: 1; }
.tabs button { height: 19px; padding: 1px 10px 0; }
.tabs .on { background: #303030; color: #fff; border-radius: 4px 4px 0 0; padding: 1px 9px 0; }
.tabs .plus { padding: 0 8px; }
.tabs .plus svg { width: 10px; height: 10px; }
.idblock { display: flex; height: 20px; width: 191px; border: 1px solid #3d3d3d; border-radius: 4px; overflow: hidden; }
.idblock button { width: 19px; background: #282828; }
.idblock .pick { width: 31px; gap: 4px; border-right: 1px solid #3d3d3d; }
.idblock input { flex: 1; min-width: 0; background: #1d1d1d; padding: 1px 6px 0; }
.idblock .lit { background: #545454; }
.idblock .off { background: #222; color: #555; }

/* areas */
.screen { flex: 1; min-height: 0; display: grid; grid-template-columns: minmax(0, 1fr) 595px; gap: 3px; padding: 0 1px; }
.left { display: grid; grid-template-rows: minmax(0, 1fr) 101px; gap: 3px; min-height: 0; }
.right { display: grid; grid-template-rows: 439fr 925fr; gap: 3px; min-height: 0; }
.area { position: relative; border-radius: 5px; overflow: hidden; display: flex; flex-direction: column; min-height: 0; }
.head { position: relative; flex: none; height: 25px; padding: 0 8px; display: grid; grid-template-columns: 1fr auto 1fr; align-items: center; }
.part { display: flex; align-items: center; gap: 6px; }
.part.mid { padding-right: 20px; }
.part.end { justify-content: flex-end; }
.head .menu { margin-left: 7px; }
.btn { display: flex; align-items: center; height: 20px; border: 1px solid #3d3d3d; border-radius: 4px; background: #282828; overflow: hidden; }
.btn.ed { width: 32px; gap: 3px; }
.btn.ed.sq { width: 20px; }
.row > button { width: 19px; height: 18px; flex: none; }
.row > button + button { border-left: 1px solid #3d3d3d; }
.row > .w31 { width: 31px; gap: 2px; }
.lit { background: #545454; }
.dim { color: #b0b0b0; }
.off { color: #555; }
.off2 { color: #888; }
.blue { background: #4772b3; color: #fff; }
.mode { width: 109px; padding: 0 2px 0 4px; }
.mode select, .orient select { flex: 1; min-width: 0; padding-left: 6px; text-shadow: 0 1px 1px #000; }
.orient { width: 80px; padding: 0 2px 0 5px; }

/* 3D viewport */
.viewport { background: radial-gradient(ellipse farthest-corner, #3f3f3f, #323232 100%); }
#viewgrid { position: absolute; inset: 0; width: 100%; height: 100%; }
.viewport .head { background: #343434; padding-right: 7px; }
.viewport .end { gap: 6px; }
.toolhead { position: relative; height: 26px; flex: none; background: rgba(52, 52, 52, .75); display: flex; justify-content: space-between; align-items: center; padding: 0 7px 0 43px; }
.modes > button, .modes > button + button { width: 18px; border: 0; }
.modes { gap: 1px; background: #3d3d3d; }
.modes svg { width: 15px; height: 15px; }
.options { width: 62px; padding: 1px 1px 0 7px; justify-content: space-between; }
.viewbody { position: relative; flex: 1; display: flex; align-items: flex-start; }
.toolbar { width: 40px; margin: 8px 0 0 8px; display: flex; flex-direction: column; gap: 6px; }
.tools { border-radius: 4px; overflow: hidden; display: flex; flex-direction: column; gap: 1px; background: #3d3d3d; }
.tools button { position: relative; height: 34px; background: #272727; }
.tools .blue { background: #4772b3; }
.tools svg { width: 23px; height: 23px; }
.tools .sub::after { content: ""; position: absolute; right: 2px; bottom: 2px; border: 2px solid; border-color: transparent #aaa #aaa transparent; }
.info { margin: 8px 0 0 18px; line-height: 18px; color: #fff; text-shadow: 0 1px 1px #000; }
.nav { margin: 2px 8px 0 auto; display: flex; flex-direction: column; align-items: flex-end; gap: 2px; }
.gizmo { width: 80px; height: 80px; margin: 8px 2px 0 0; overflow: visible; }
.gizmo text { font: 12px "DejaVu Sans", sans-serif; text-anchor: middle; fill: #1c2a2c; }
.nav button { width: 28px; height: 28px; border-radius: 14px; background: rgba(34, 34, 34, .8); }
.handle { position: absolute; background: #282828; width: 8px; height: 14px; }
.handle svg { width: 8px; height: 14px; }
.handle.r { right: 0; border-radius: 4px 0 0 4px; }
.handle.l { left: 0; border-radius: 0 4px 4px 0; }
.viewbody .handle { top: 15px; }

/* timeline */
.timeline { background: #303030; border-radius: 5px 5px 0 0; }
.timeline .head { padding-right: 6px; }
.timeline .head .menu { margin-left: 3px; }
.text > button, .text > button + button { width: 58px; padding: 1px 2px 0 6px; justify-content: space-between; }
.text > button:first-child { width: 69px; }
.transport > button, .transport > button + button { width: 20px; }
.frame { width: 75px; background: #545454; text-align: center; }
.timeline .end, .timeline input { font-family: "DejaVu Sans", sans-serif; }
.range label { display: flex; align-items: center; justify-content: space-between; height: 18px; background: #545454; border-left: 1px solid #3d3d3d; font-family: "DejaVu Sans Condensed", "DejaVu Sans", sans-serif; }
.range .start { width: 88px; padding: 1px 13px 0 15px; }
.range .stop { width: 83px; padding: 1px 13px 0 15px; }
.range input { width: 24px; text-align: right; }
.ruler { position: relative; flex: 1; background: linear-gradient(#1d1d1d 23px, #303030 23px); font-family: "DejaVu Sans", sans-serif; color: #a0a0a0; }
.ruler span { position: absolute; top: 6px; width: 40px; margin-left: -20px; text-align: center; }
.ruler i { position: absolute; top: 23px; bottom: 0; width: 1px; background: #272727; }
.ruler i.major { background: #171717; }
.ruler .outside { position: absolute; top: 23px; bottom: 0; background: rgba(24, 24, 24, .7); }
.ruler .outside.before { left: 0; }
.ruler .outside.after { right: 0; }
.ruler .playhead { position: absolute; top: 3px; bottom: 0; width: 2px; background: #4772b3; }
.ruler .playhead b { position: absolute; left: -11px; top: 0; width: 24px; height: 18px; line-height: 19px; border-radius: 4px; background: #4772b3; color: #fff; font-weight: normal; text-align: center; }
.scroll { height: 9px; flex: none; margin: 1px 8px 0; border-radius: 5px; background: #545454; display: flex; justify-content: space-between; align-items: center; padding: 0 2px; }
.scroll i { width: 6px; height: 6px; border-radius: 3px; background: #2a2a2a; }
.timeline .handle { top: 39px; }

/* outliner */
.outliner { background: #282828; }
.outliner .head { height: 26px; }
.outliner .end { gap: 5px; }
.outliner .head, .properties .head { padding-right: 6px; }
.find { width: 111px; padding-left: 4px; background: #1d1d1d; }
.find input { flex: 1; min-width: 0; }
.treelist { flex: 1; color: #c8c8c8; background: repeating-linear-gradient(#282828 0 20px, #2b2b2b 20px 40px); position: relative; }
.treelist::before { content: ""; position: absolute; left: 29px; top: 45px; width: 1px; height: 150px; background: #666; z-index: 1; }
.treelist li { display: flex; align-items: center; height: 20px; padding: 1px 9px 0 47px; }
.treelist li.root { padding-left: 20px; }
.treelist li.coll { padding-left: 26px; }
.ico { width: 20px; height: 18px; display: flex; align-items: center; justify-content: center; color: #c07f4d; margin: 0 4px 0 6px; }
.coll .ico { margin-left: 7px; }
.root .ico { margin-left: 0; }
.root .ico, .coll .ico { color: #e0e0e0; }
.tri { width: 7px; height: 7px; color: #c0c0c0; }
.box { background: #545454; border: 1px solid #686868; border-radius: 4px; }
.data { display: flex; align-items: center; justify-content: center; width: 20px; height: 18px; margin-left: 20px; color: #00b58c; }
.data.next { margin-left: 0; }
.data.mod { color: #5f82d6; }
.tog { margin-left: auto; display: flex; align-items: center; gap: 6px; color: #e2e2e2; }
.tog input { width: 10px; height: 10px; background: #e2e2e2; display: grid; place-items: center; margin-right: 1px; }
.tog input::before { content: ""; width: 4px; height: 7px; border: solid #222; border-width: 0 2px 2px 0; transform: rotate(40deg); }
.treelist .active { background: #334d80; color: #f5a623; }
.active .box { background: #5b6f99; border-color: #7487ae; }
.active .ico { color: #cc8d66; }

/* properties */
.properties { background: #303030; border-radius: 5px 5px 0 0; }
.properties .mid { padding-right: 0; }
.propbody { flex: 1; display: flex; min-height: 0; }
.proptabs { width: 28px; flex: none; background: #1d1d1d; padding-top: 8px; display: flex; flex-direction: column; gap: 8px; color: #b4b4b4; }
.proptabs div { border-bottom: 1px solid #181818; margin: 0 0 -1px 2px; }
.proptabs button { width: 26px; height: 28px; }
.proptabs .on { background: #303030; border-radius: 4px 0 0 4px; }
.proptabs .red { color: #b5545d; }
.proptabs .white { color: #e0e0e0; }
.proptabs .orange { color: #bd7b48; }
.proptabs .mods { color: #6f9bff; }
.proptabs .bluei { color: #5f82d6; }
.proptabs .green { color: #00b58c; }
.panel { flex: 1; padding: 8px 7px 0 8px; }
.crumb { display: flex; align-items: center; height: 20px; padding: 0 2px 0 3px; }
.crumb span { margin-left: 9px; padding-top: 1px; text-shadow: 0 1px 1px #000; }
.pin { margin-left: auto; color: #999; }
.addmod { width: 100%; margin-top: 16px; padding: 1px 2px 0 7px; justify-content: space-between; text-shadow: 0 1px 1px #000; }
```
FILE: app.js
```js
// Floor grid of the orthographic top view
const CELL = 52.92;
const ORIGIN = { x: 181, y: 3 }; // world origin, measured from the middle of the view

function drawGrid() {
  const canvas = document.getElementById('viewgrid');
  const w = canvas.width = canvas.clientWidth;
  const h = canvas.height = canvas.clientHeight;
  const ctx = canvas.getContext('2d');
  const ox = w / 2 + ORIGIN.x;
  const oy = h / 2 + ORIGIN.y;
  const color = i => i % 10 === 0 ? '#5c5c5c' : '#4b4b4b';
  const pass = major => {
    for (let i = Math.ceil(-ox / CELL); ox + i * CELL < w; i++) {
      if ((i % 10 === 0) !== major) continue;
      ctx.fillStyle = color(i);
      ctx.fillRect(ox + i * CELL, 0, 1.3, h);
    }
    for (let i = Math.ceil(-oy / CELL); oy + i * CELL < h; i++) {
      if ((i % 10 === 0) !== major) continue;
      ctx.fillStyle = i === 0 ? '#a0353f' : color(i);
      ctx.fillRect(0, oy + i * CELL - 0.5, w, i === 0 ? 2 : 1.3);
    }
  };
  pass(false);
  pass(true);
}

// Timeline ruler
const FIRST = -8.85, SPAN = 268.8, START = 1, END = 250, CURRENT = 1;
const pct = f => (f - FIRST) / SPAN * 100 + '%';

function buildRuler() {
  let html = '';
  for (let f = -7.5; f < FIRST + SPAN; f += 2.5) {
    const major = f % 5 === 0;
    html += `<i class="${major ? 'major' : ''}" style="left:${pct(f)}"></i>`;
    if (major && f <= 255) html += `<span style="left:${pct(f)}">${f}</span>`;
  }
  html += `<div class="outside before" style="width:${pct(START)}"></div>`;
  html += `<div class="outside after" style="left:${pct(END)}"></div>`;
  html += `<div class="playhead" style="left:${pct(CURRENT)}"><b>${CURRENT}</b></div>`;
  document.getElementById('ruler').innerHTML = html;
}

drawGrid();
buildRuler();
addEventListener('resize', drawGrid);
```
